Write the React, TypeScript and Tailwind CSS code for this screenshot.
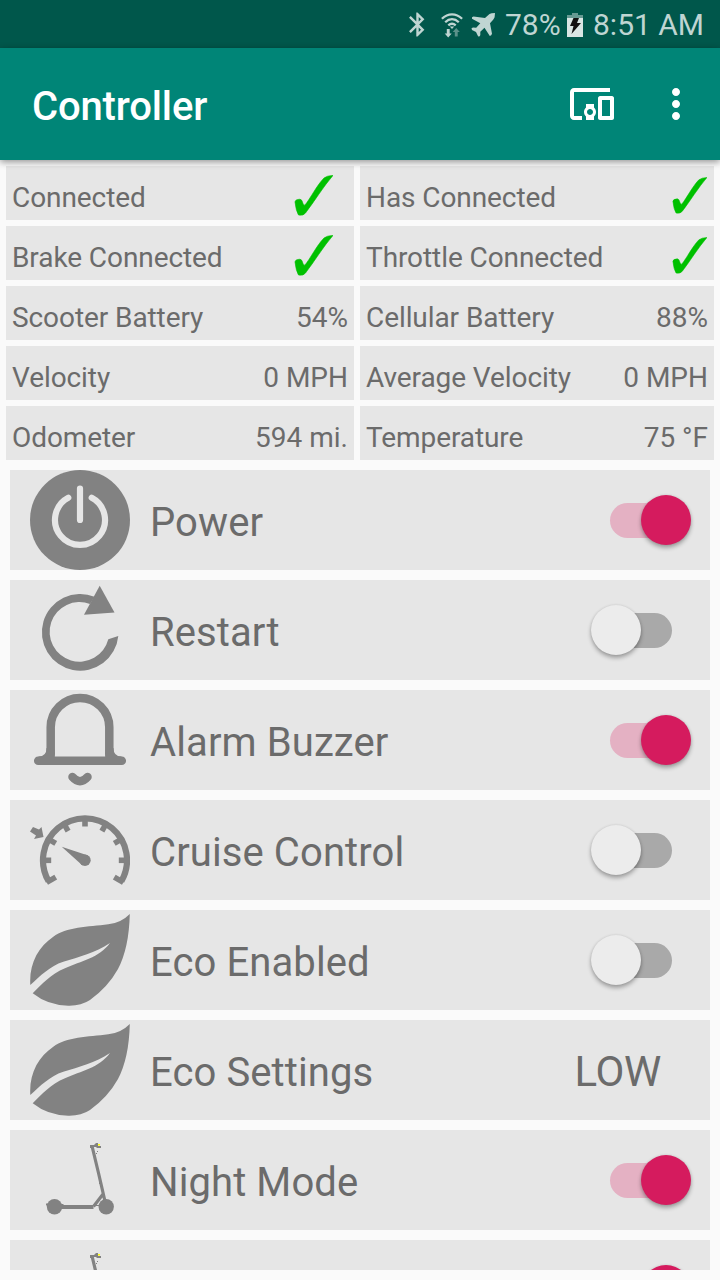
import type { ReactNode } from 'react';
import { MdBluetooth, MdDevicesOther, MdMoreVert } from 'react-icons/md';

function StatusBar() {
  return (
    <div className="flex h-12 shrink-0 items-center bg-[#00574b] pl-[403px] pt-px text-[30px] leading-[46px] text-[#bfd5d2]">
      <MdBluetooth size={29} className="shrink-0" />
      <svg width="22" height="26" viewBox="0 0 22 26" className="ml-[9px] shrink-0" fill="none" stroke="currentColor" strokeWidth="2.300">
        <path d="M.9 6.800C7 .8 15 .8 21.100 6.800M4.200 10.200C8.300 6.200 13.700 6.200 17.800 10.200M7.300 13.400C9.500 11.400 12.500 11.400 14.700 13.400" />
        <path d="M8.800 14.500L11 17L13.200 14.500Z" fill="currentColor" stroke="none" />
        <path d="M5.800 17h2.900v4.500h2L7.200 25.500L3.700 21.500h2.100z" fill="currentColor" stroke="none" />
        <path d="M13.800 24.500h2.900V20h2.100L15.200 16L11.700 20h2.100z" fill="#5b918a" stroke="none" />
      </svg>
      <svg width="24" height="24" viewBox="0 0 24 24" className="ml-[8px] shrink-0" fill="currentColor">
        <path d="M24 0L23.600 4.200Q23 6 19 10.200L21 20.800Q20.500 22.500 18.800 23L13.500 14.800L9.300 18.800V22Q9.300 23.500 7.200 23.500L5 19L1 17L.5 15.300L2 14.500L5.200 14.700L9.300 10.200L1 5.800V4.200L2.500 3.500L14 5L18.500 .9Q20 0 24 0Z" />
      </svg>
      <span className="ml-[10px] w-[56px] whitespace-nowrap">78%</span>
      <svg width="16" height="24" viewBox="0 0 16 24" className="ml-[6px] shrink-0">
        <path d="M5 0h6v2h5v6H0V2h5z" fill="#669a93" />
        <path d="M0 5h16v19H0z" fill="#d9e6e4" />
        <path d="M6.500 5h5.500l-2 5h4L4.500 21l2-8H3z" fill="#111" />
      </svg>
      <span className="ml-[10px] whitespace-nowrap">8:51 AM</span>
    </div>
  );
}

function Toolbar() {
  return (
    <div className="relative z-10 flex h-28 shrink-0 items-center bg-[#008577] pl-8 pr-5 text-white shadow-[0_2px_7px_rgba(0,0,0,0.42)]">
      <h1 className="flex-1 pt-[6px] text-[40px] font-medium leading-[48px] tracking-[-0.15px]">Controller</h1>
      <MdDevicesOther size={48} />
      <MdMoreVert size={48} className="ml-9" />
    </div>
  );
}

function Check({ small = false }: { small?: boolean }) {
  return (
    <svg
      viewBox="0 0 39 41"
      className={small ? 'mr-px mt-[11px] h-[37px] w-[35px]' : 'mr-[15px] mt-[9px] h-[41px] w-[39px]'}
      fill="#00c000"
    >
      <path d="M1 27Q1 24.500 6 24.200Q8 24.500 8.800 28Q9.500 31 11 30C16 24 23 10 30 3Q33 .6 39 .4C29 12 20 27 11.500 38Q9.500 41 4.500 40Q2 36 1 27Z" stroke="#00c000" strokeWidth="0.600" />
    </svg>
  );
}

function Stat({ label, value }: { label: string; value: ReactNode }) {
  return (
    <div className="flex h-[54px] items-start justify-between overflow-hidden bg-[#e6e6e6] px-1.5 text-[28px] leading-[33px]">
      <span className="mt-[15px] whitespace-nowrap tracking-[-0.08px]">{label}</span>
      {typeof value === 'string' ? <span className="mt-[15px] whitespace-nowrap">{value}</span> : value}
    </div>
  );
}

function Icon({ children }: { children: ReactNode }) {
  return (
    <svg viewBox="0 0 100 100" className="h-[100px] w-[100px] shrink-0 text-[#828282]" fill="currentColor">
      {children}
    </svg>
  );
}

function PowerIcon() {
  return (
    <Icon>
      <circle cx="50" cy="50" r="50" />
      <path d="M38.300 27.800A25 25 0 1 0 61.700 27.800M50 18.500V50" fill="none" stroke="#e6e6e6" strokeWidth="6.200" strokeLinecap="round" />
    </Icon>
  );
}

function RestartIcon() {
  return (
    <Icon>
      <path d="M64.500 16.800A38.300 38.300 0 1 0 88.300 56L78.300 59.300A29.800 29.800 0 1 1 60 24Z" />
      <path d="M69.700 5.700L84.500 32.500L54 34.800Z" />
    </Icon>
  );
}

function BellIcon() {
  return (
    <Icon>
      <g fill="none" stroke="currentColor" strokeWidth="8.500" strokeLinecap="round">
        <path d="M20.700 64V37.300A29.300 29.300 0 0 1 79.300 37.300V64" />
        <path d="M8.200 70.700H91.800M42.500 87Q50 95.500 57.500 87" />
      </g>
      <path d="M16.500 58Q16.500 66.500 8.500 66.500V70H25L24.500 60ZM83.500 58Q83.500 66.500 91.500 66.500V70H75L75.500 60Z" />
    </Icon>
  );
}

const ticks = [-120, -90, -60, -30, 0, 30, 60, 90, 120];

function CruiseIcon() {
  return (
    <Icon>
      <path d="M18.630 81.300A42 42 0 1 1 91.370 81.300" fill="none" stroke="currentColor" strokeWidth="6.200" />
      {ticks.map((angle) => (
        <path key={angle} d="M52.200 16h5.600v10.500h-5.600z" transform={`rotate(${angle} 55 60.300)`} />
      ))}
      <circle cx="55" cy="60.300" r="5.700" />
      <path d="M31.700 46.800L58 55.500L52.500 65.500Z" />
      <path d="M3 27L9 29.500L11.500 27L13.500 37L4 39L6 35.500L0 31.500Z" />
    </Icon>
  );
}

function LeafIcon() {
  return (
    <Icon>
      <path d="M99.800 4Q91 13 78.300 14.300C58 17 36 17 23.300 26.700C8 37 -1 54 .3 75C10 66 20 56 33.300 51.700C49 47 65 43 80 33C69 48 51 51 35 58.300C21 64 12 74 2.700 83.300Q18 95.500 38.300 95.700Q51 96 60 90Q78 77 88 59Q99 38 99.800 4Z" />
    </Icon>
  );
}

function ScooterIcon() {
  return (
    <Icon>
      <circle cx="24.500" cy="76.700" r="7.700" />
      <circle cx="76.200" cy="76.700" r="7.700" />
      <path d="M16 73.500h4v2h-4zM29 74h4.500v3H29z" />
      <path d="M30 77H63.500" fill="none" stroke="currentColor" strokeWidth="4" />
      <path d="M63.500 76.500L73.500 63.500M62 16L68.500 43L74.700 70" fill="none" stroke="currentColor" strokeWidth="3.200" />
      <path d="M66 75.500H72" stroke="currentColor" />
      <path d="M60 15h4l2-2h2v3h3v2h-4l-1-1h-3v1h-3zM69 47h1v7h-1zM67 21h1v1h-1zM66 23h1v1h-1z" />
      <path d="M68 14h2v1.500h-2z" fill="#ff0" />
    </Icon>
  );
}

function Toggle({ on }: { on: boolean }) {
  return (
    <div role="switch" aria-checked={on} className={`mr-[38.5px] flex h-[35px] w-[62px] items-center rounded-full ${on ? 'bg-[#e4b1c3]' : 'bg-[#a9a9a9]'}`}>
      <span
        className={`h-[50px] w-[50px] shrink-0 rounded-full shadow-[0_3px_4px_rgba(0,0,0,0.3),0_0_3px_rgba(0,0,0,0.1)] ${
          on ? 'ml-[31px] bg-[#d51b5e]' : 'ml-[-19px] bg-[#ececec]'
        }`}
      />
    </div>
  );
}

function Row({ icon, label, children }: { icon: ReactNode; label: string; children: ReactNode }) {
  return (
    <div className="flex h-[100px] shrink-0 items-center bg-[#e6e6e6] pl-5 text-[40px] leading-[48px]">
      {icon}
      <span className="ml-5 flex-1 whitespace-nowrap pt-[6px] tracking-[0.1px]">{label}</span>
      {children}
    </div>
  );
}

export default function App() {
  return (
    <div className="flex h-[1280px] w-[720px] flex-col overflow-hidden bg-[#fafafa] font-['Roboto',sans-serif] text-[#6b6b6b]">
      <StatusBar />
      <Toolbar />
      <div className="grid shrink-0 grid-cols-[348px_354px] gap-1.5 px-1.5 pt-1.5">
        <Stat label="Connected" value={<Check />} />
        <Stat label="Has Connected" value={<Check small />} />
        <Stat label="Brake Connected" value={<Check />} />
        <Stat label="Throttle Connected" value={<Check small />} />
        <Stat label="Scooter Battery" value="54%" />
        <Stat label="Cellular Battery" value="88%" />
        <Stat label="Velocity" value="0 MPH" />
        <Stat label="Average Velocity" value="0 MPH" />
        <Stat label="Odometer" value="594 mi." />
        <Stat label="Temperature" value="75 °F" />
      </div>
      <div className="mx-2.5 mb-2.5 mt-2.5 flex min-h-0 flex-1 flex-col gap-2.5 overflow-hidden">
        <Row icon={<PowerIcon />} label="Power"><Toggle on /></Row>
        <Row icon={<RestartIcon />} label="Restart"><Toggle on={false} /></Row>
        <Row icon={<BellIcon />} label="Alarm Buzzer"><Toggle on /></Row>
        <Row icon={<CruiseIcon />} label="Cruise Control"><Toggle on={false} /></Row>
        <Row icon={<LeafIcon />} label="Eco Enabled"><Toggle on={false} /></Row>
        <Row icon={<LeafIcon />} label="Eco Settings"><span className="mr-[49px] pt-[4px] text-[42px] tracking-[-0.3px]">LOW</span></Row>
        <Row icon={<ScooterIcon />} label="Night Mode"><Toggle on /></Row>
        <Row icon={<ScooterIcon />} label=""><Toggle on /></Row>
      </div>
    </div>
  );
}
